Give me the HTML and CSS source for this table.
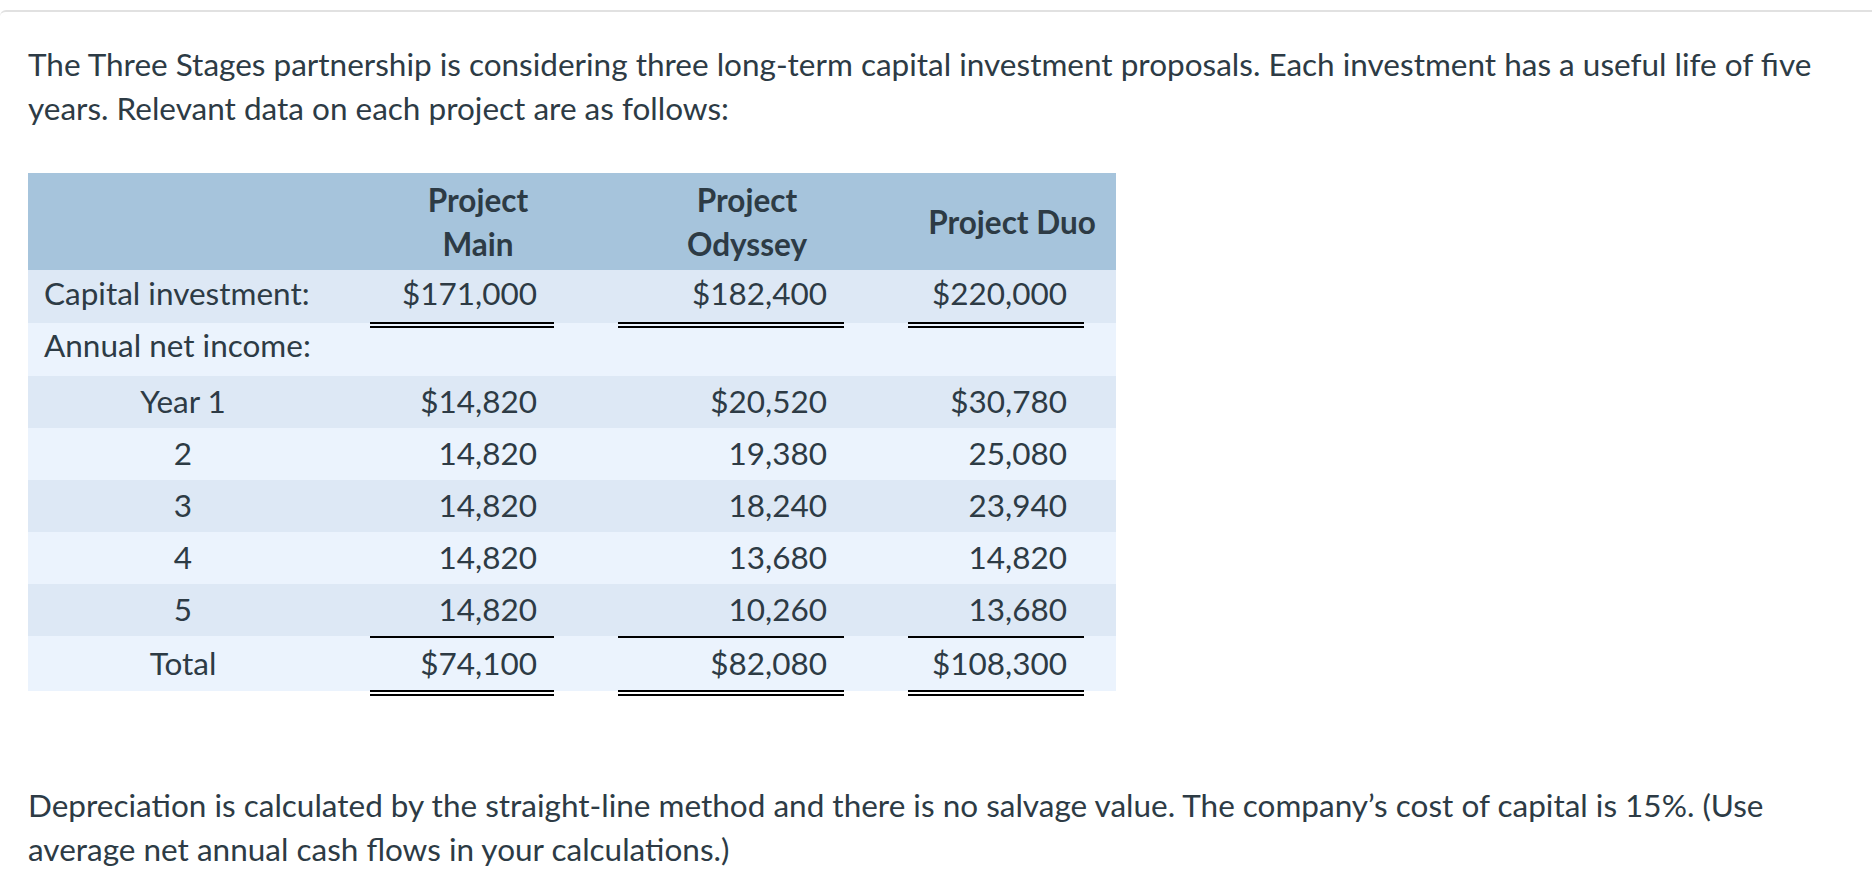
FILE: index.html
```html
<!DOCTYPE html>
<html lang="en">
<head>
<meta charset="utf-8">
<title>Three Stages partnership</title>
<link rel="stylesheet" href="styles.css">
</head>
<body>
<div class="card">
  <p class="intro">The Three Stages partnership is considering three long-term capital investment proposals. Each investment has a useful life of five years. Relevant data on each project are as follows:</p>

  <div class="table">
    <div class="row head">
      <div class="cell"></div>
      <div class="cell hcell">Project<br>Main</div>
      <div class="cell hcell">Project<br>Odyssey</div>
      <div class="cell hcell">Project Duo</div>
    </div>

    <div class="row dark r-cap">
      <div class="cell label">Capital investment:</div>
      <div class="cell num"><span class="amt dbl cap-u">$171,000</span></div>
      <div class="cell num"><span class="amt dbl cap-u">$182,400</span></div>
      <div class="cell num"><span class="amt dbl cap-u">$220,000</span></div>
    </div>

    <div class="row light r-ann">
      <div class="cell label">Annual net income:</div>
      <div class="cell num"></div>
      <div class="cell num"></div>
      <div class="cell num"></div>
    </div>

    <div class="row dark r-year">
      <div class="cell center">Year 1</div>
      <div class="cell num"><span class="amt">$14,820</span></div>
      <div class="cell num"><span class="amt">$20,520</span></div>
      <div class="cell num"><span class="amt">$30,780</span></div>
    </div>

    <div class="row light r-year">
      <div class="cell center">2</div>
      <div class="cell num"><span class="amt">14,820</span></div>
      <div class="cell num"><span class="amt">19,380</span></div>
      <div class="cell num"><span class="amt">25,080</span></div>
    </div>

    <div class="row dark r-year">
      <div class="cell center">3</div>
      <div class="cell num"><span class="amt">14,820</span></div>
      <div class="cell num"><span class="amt">18,240</span></div>
      <div class="cell num"><span class="amt">23,940</span></div>
    </div>

    <div class="row light r-year">
      <div class="cell center">4</div>
      <div class="cell num"><span class="amt">14,820</span></div>
      <div class="cell num"><span class="amt">13,680</span></div>
      <div class="cell num"><span class="amt">14,820</span></div>
    </div>

    <div class="row dark r-year">
      <div class="cell center">5</div>
      <div class="cell num"><span class="amt single">14,820</span></div>
      <div class="cell num"><span class="amt single">10,260</span></div>
      <div class="cell num"><span class="amt single">13,680</span></div>
    </div>

    <div class="row light r-total">
      <div class="cell center">Total</div>
      <div class="cell num"><span class="amt dbl tot-u">$74,100</span></div>
      <div class="cell num"><span class="amt dbl tot-u">$82,080</span></div>
      <div class="cell num"><span class="amt dbl tot-u">$108,300</span></div>
    </div>
  </div>

  <p class="outro">Depreciation is calculated by the straight-line method and there is no salvage value. The company’s cost of capital is 15%. (Use average net annual cash flows in your calculations.)</p>
</div>
</body>
</html>
```

FILE: styles.css
```css
html, body {
  margin: 0;
  padding: 0;
  background: #ffffff;
}

body {
  font-family: Lato, "Open Sans", "Liberation Sans", sans-serif;
  color: #2d3b45;
  font-size: 31.5px;
  line-height: 44px;
}

.card {
  margin-top: 10px;
  border-top: 2px solid #e1e1e1;
  border-top-left-radius: 6px;
  padding: 30px 28px 0 28px;
}

.intro {
  margin: 0 0 43px 0;
}

.outro {
  margin: 92px 0 0 0;
}

.table {
  width: 1088px;
}

.row {
  display: grid;
  grid-template-columns: 310px 248px 290px 240px;
  box-sizing: border-box;
}

.head {
  background: #a6c4dc;
  height: 97px;
  padding-top: 1.5px;
  align-items: center;
  font-weight: 700;
}

.dark {
  background: #dde8f5;
}

.light {
  background: #ebf3fd;
}

.r-cap {
  height: 53px;
  padding-top: 1px;
  align-items: start;
}

.r-ann {
  height: 53px;
  padding-top: 0;
  align-items: start;
}

.r-year {
  height: 52px;
  padding-top: 3px;
  align-items: start;
}

.r-total {
  height: 55px;
  padding-top: 4.5px;
  align-items: start;
}

.hcell {
  padding-left: 32px;
  text-align: center;
}

.label {
  padding-left: 16px;
  white-space: nowrap;
}

.center {
  text-align: center;
}

.num {
  padding: 0 32px;
}

.amt {
  display: block;
  text-align: right;
  padding-right: 17px;
  position: relative;
  z-index: 1;
}

.single {
  padding-bottom: 5px;
  border-bottom: 2px solid #000000;
}

.dbl {
  border-bottom: 6px double #000000;
}

.cap-u {
  padding-bottom: 7px;
}

.tot-u {
  padding-bottom: 5.5px;
}
```
